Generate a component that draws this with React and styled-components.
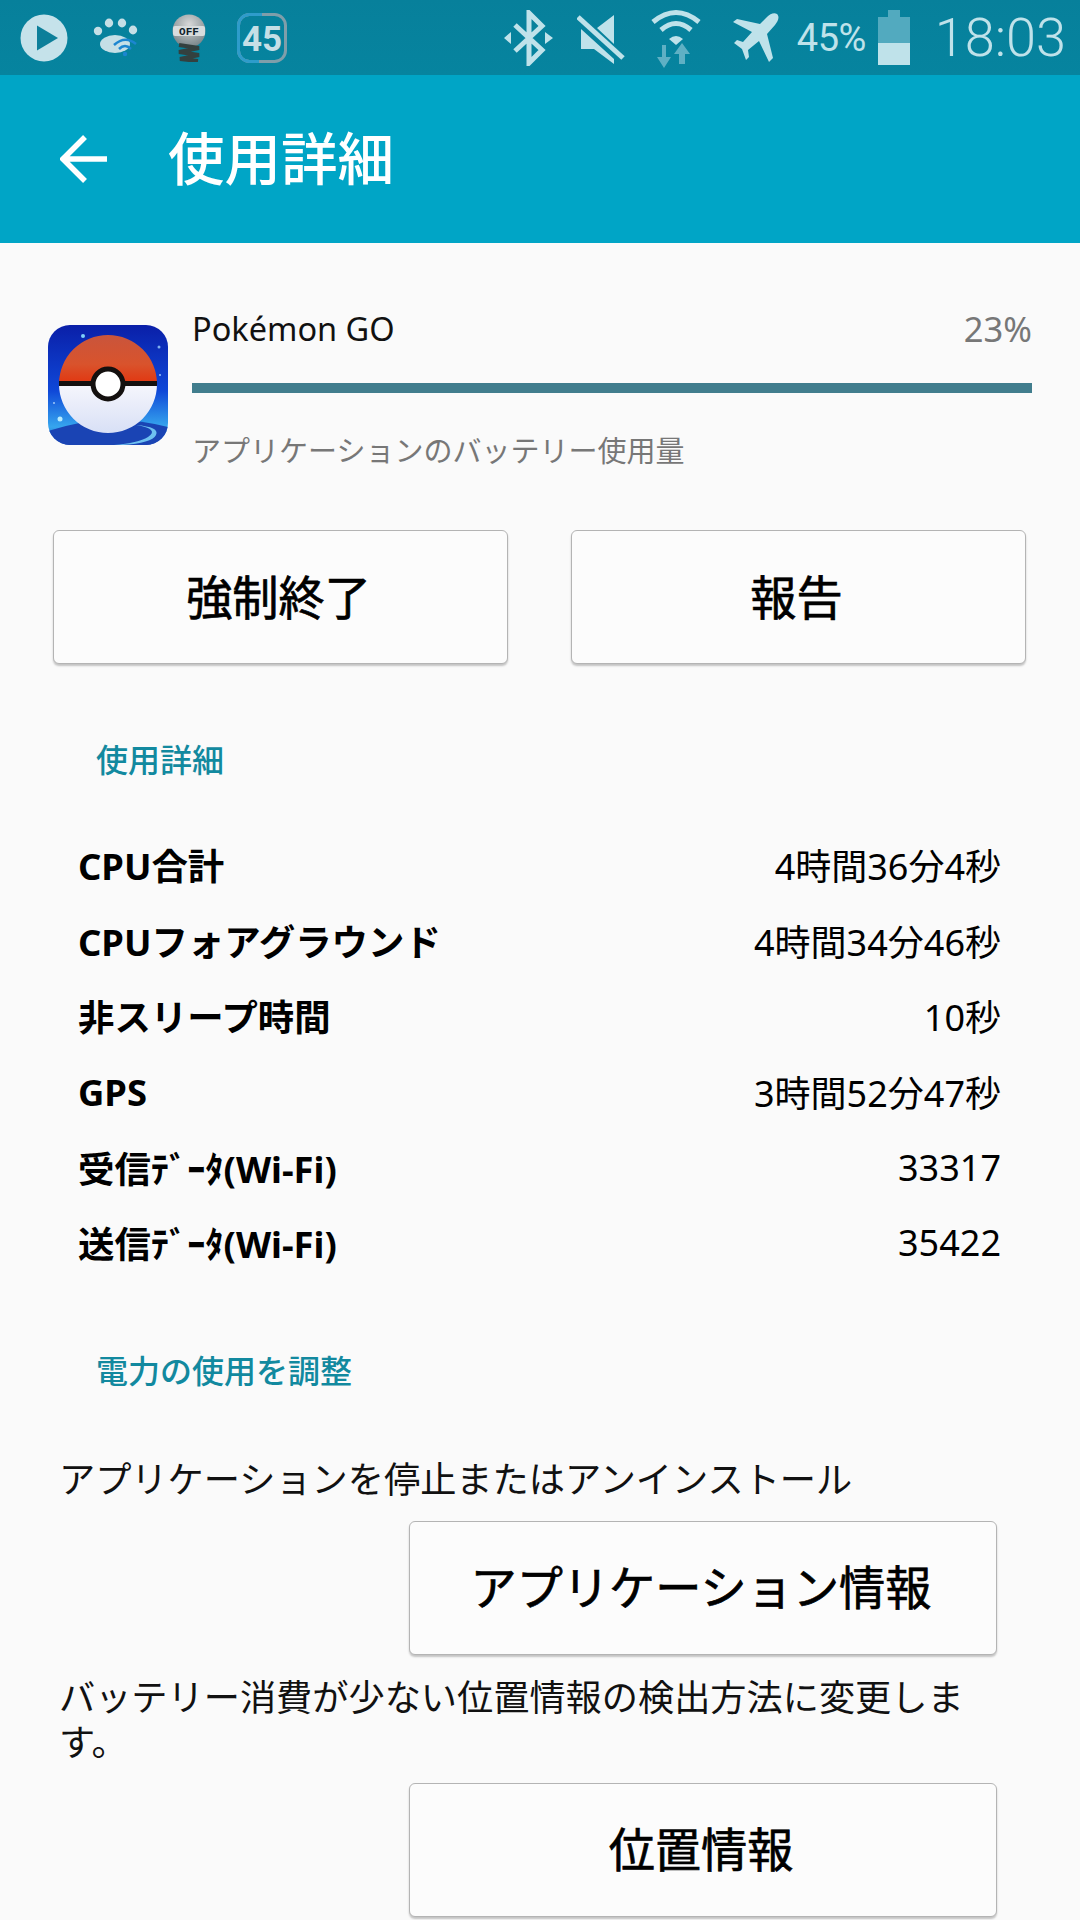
import React from "react";
import styled, { createGlobalStyle } from "styled-components";

const GlobalStyle = createGlobalStyle`
	html, body {
		margin: 0;
		padding: 0;
		background: #fafafa;
		font-family: "Noto Sans", "Noto Sans CJK JP", sans-serif;
	}
`;

const Page = styled.div`
	width: 1080px;
	height: 1920px;
	overflow: hidden;
	background: #fafafa;
	color: #000;
`;

const StatusBar = styled.div`
	height: 75px;
	background: linear-gradient(#07809b, #06849f);
	display: flex;
	align-items: center;
	justify-content: space-between;
	padding: 0 14px 0 20px;
	box-sizing: border-box;
	color: #bfe2ea;
`;

const StatusGroup = styled.div`
	display: flex;
	align-items: center;
`;

const StatusSlot = styled.div`
	display: flex;
	align-items: center;
	margin-left: ${props => props.gap || 0}px;
	height: 75px;
`;

const BatteryText = styled.span`
	font-family: "Roboto", sans-serif;
	font-size: 38px;
	letter-spacing: -0.5px;
	color: #bfe2ea;
`;

const Clock = styled.span`
	font-family: "Roboto", sans-serif;
	font-size: 54px;
	font-weight: 300;
	color: #bfe2ea;
`;

const AppBar = styled.div`
	height: 168px;
	background: #00a5c6;
	display: flex;
	align-items: center;
	padding-left: 60px;
	box-sizing: border-box;
`;

const AppBarTitle = styled.h1`
	margin: 0 0 0 60px;
	font-size: 56.5px;
	line-height: 70px;
	font-weight: 500;
	color: #fff;
`;

const AppInfo = styled.div`
	display: flex;
	gap: 24px;
	padding: 60px 48px 0;
`;

const AppIcon = styled.svg`
	flex: none;
	width: 120px;
	height: 120px;
	margin-top: 22px;
`;

const AppDetails = styled.div`
	flex: 1;
`;

const AppHead = styled.div`
	display: flex;
	justify-content: space-between;
	align-items: center;
	height: 50px;
`;

const AppName = styled.span`
	font-size: 32.5px;
	color: #111;
`;

const Percent = styled.span`
	font-size: 34.5px;
	color: #777;
`;

const UsageBar = styled.div`
	height: 10px;
	margin-top: 30px;
	background: #417d8d;
`;

const AppCaption = styled.div`
	height: 40px;
	line-height: 40px;
	margin-top: 38px;
	font-size: 29px;
	color: #777;
`;

const ButtonRow = styled.div`
	display: flex;
	justify-content: space-between;
	padding: 0 54px 0 53px;
	margin-top: 59px;
`;

const Btn = styled.button`
	display: block;
	width: ${props => props.width}px;
	height: 134px;
	padding: 0 4px 5px 0;
	box-sizing: border-box;
	background: #fcfcfc;
	border: 1px solid #b4b4b4;
	border-radius: 6px;
	box-shadow: 0 2px 2px rgba(0, 0, 0, 0.22);
	font-family: inherit;
	font-size: 46.2px;
	font-weight: 400;
	-webkit-text-stroke: 0.7px #000;
	color: #000;
`;

const SectionTitle = styled.h2`
	margin: ${props => props.top}px 0 0;
	padding-left: 96px;
	height: 50px;
	line-height: 50px;
	font-size: 32px;
	font-weight: 500;
	color: #12899f;
`;

const StatList = styled.div`
	margin-top: 42px;
	padding: 0 79px 0 78px;
`;

const StatRow = styled.div`
	display: flex;
	justify-content: space-between;
	align-items: center;
	height: 75.6px;
`;

const StatLabel = styled.span`
	font-size: 36.4px;
	font-weight: 700;
`;

const StatValue = styled.span`
	font-size: 36px;
`;

const ActionText = styled.p`
	margin: ${props => props.top}px 0 0;
	padding-left: 59px;
	width: 924px;
	font-size: 36.2px;
	line-height: 45px;
	color: #111;
`;

const ActionButton = styled(Btn)`
	margin: ${props => props.top}px 0 0 409px;
`;

const stats = [
	["CPU合計", "4時間36分4秒"],
	["CPUフォアグラウンド", "4時間34分46秒"],
	["非スリープ時間", "10秒"],
	["GPS", "3時間52分47秒"],
	["受信ﾃﾞｰﾀ(Wi-Fi)", "33317"],
	["送信ﾃﾞｰﾀ(Wi-Fi)", "35422"],
];

const PlayIcon = () => (
	<svg width="48" height="48" viewBox="0 0 48 48">
		<circle cx="24" cy="24" r="23.5" fill="#c5e2ea" />
		<path d="M17 11.5 L38 24 L17 36.5 Z" fill="#0c7f9a" />
	</svg>
);

const PawIcon = () => (
	<svg width="46" height="40" viewBox="0 0 46 40">
		<ellipse cx="5" cy="13" rx="4.2" ry="4.2" fill="#c5dfe6" />
		<ellipse cx="16" cy="5" rx="4.2" ry="4.4" fill="#c5dfe6" />
		<ellipse cx="29" cy="5" rx="4.2" ry="4.4" fill="#c5dfe6" />
		<ellipse cx="40" cy="12" rx="4.2" ry="4.4" fill="#c5dfe6" />
		<ellipse cx="22" cy="26" rx="15" ry="9" fill="#c5dfe6" />
		<path d="M21 27 Q32 17 43 26" stroke="#1c86d0" strokeWidth="2.5" fill="none" />
		<path d="M26 31 Q32 25 38 31" stroke="#1c86d0" strokeWidth="2.5" fill="none" />
		<circle cx="32" cy="36" r="2.2" fill="#1c86d0" />
	</svg>
);

const BulbIcon = () => (
	<svg width="36" height="48" viewBox="0 0 36 48">
		<defs>
			<radialGradient id="bulbFill" cx="0.5" cy="0.3" r="0.75">
				<stop offset="0" stopColor="#d8d8d8" />
				<stop offset="1" stopColor="#6f7d82" />
			</radialGradient>
		</defs>
		<circle cx="18" cy="17" r="16.5" fill="url(#bulbFill)" />
		<rect x="2" y="12" width="32" height="10" rx="2" fill="#d8dcdd" />
		<text x="18" y="21" textAnchor="middle" fontSize="11" fontWeight="700" fontFamily="Liberation Mono, monospace" fill="#10202a">OFF</text>
		<path d="M8 31 L28 34 L8 38 L28 41 L9 45 L27 47" stroke="#33403f" strokeWidth="4" fill="none" />
	</svg>
);

const TimerIcon = () => (
	<svg width="50" height="50" viewBox="0 0 50 50">
		<rect x="1.5" y="1.5" width="47" height="47" rx="11" fill="none" stroke="#7f9eaa" strokeWidth="3" />
		<path d="M25 1.5 H12.5 A11 11 0 0 0 1.5 12.5 V37.5 A11 11 0 0 0 12.5 48.5 H22" fill="none" stroke="#2e9ccb" strokeWidth="3" />
		<text x="25" y="38" textAnchor="middle" fontSize="35" fontWeight="700" fontFamily="Roboto, sans-serif" fill="#c5dfe6">45</text>
	</svg>
);

const BluetoothIcon = () => (
	<svg width="50" height="56" viewBox="0 0 50 56">
		<path d="M11 15 L38 40 L25 53 V3 L38 16 L11 41" stroke="#bfe2ea" strokeWidth="5" fill="none" />
		<path d="M0 28 L7 22 V34 Z M49 28 L41 22 V34 Z" fill="#bfe2ea" />
	</svg>
);

const MuteIcon = () => (
	<svg width="48" height="54" viewBox="0 0 48 54">
		<path d="M4 18 V38 H17 L37 53 L37 48 L4 18 Z M37 4 L20 17 L37 33 Z" fill="#bfe2ea" />
		<path d="M1 6 L46 47" stroke="#bfe2ea" strokeWidth="5" fill="none" />
	</svg>
);

const WifiIcon = () => (
	<svg width="50" height="60" viewBox="0 0 50 60">
		<path d="M2 14 Q25 -5 48 14" stroke="#bfe2ea" strokeWidth="5" fill="none" />
		<path d="M10 22 Q25 9 40 22" stroke="#bfe2ea" strokeWidth="5" fill="none" />
		<path d="M18 31 Q25 25 32 31 L25 37 Z" fill="#bfe2ea" />
		<path d="M15 37 V49 H20 L13 60 L6 49 H11 V37 Z" fill="#5fb0c4" />
		<path d="M31 35 L39 46 H34 V56 H28 V46 H23 Z" fill="#5fb0c4" />
	</svg>
);

const PlaneIcon = () => (
	<svg width="46" height="50" viewBox="0 0 46 50">
		<path d="M44 1 C41 -1 37 1 34 4 L27 11 L4 6 L0 9 L19 19 L10 29 L4 27 L1 30 L9 36 L13 47 L16 44 L15 37 L26 28 L36 49 L40 45 L34 21 L42 12 C45 8 47 4 44 1 Z" fill="#bfe2ea" />
	</svg>
);

const BatteryIcon = () => (
	<svg width="32" height="55" viewBox="0 0 32 55">
		<path d="M10 0 H22 V7 H32 V33 H0 V7 H10 Z" fill="#52aabf" />
		<rect x="0" y="33" width="32" height="22" fill="#bfe2ea" />
	</svg>
);

const BackArrow = () => (
	<svg width="48" height="48" viewBox="0 0 48 48">
		<path d="M47 24 H4 M25 2 L3 24 L25 46" stroke="#fff" strokeWidth="5.5" fill="none" />
	</svg>
);

const GoIcon = () => (
	<AppIcon viewBox="0 0 120 120">
		<defs>
			<linearGradient id="sky" x1="0" y1="0" x2="0" y2="1">
				<stop offset="0" stopColor="#0a1fa8" />
				<stop offset="0.55" stopColor="#0f48d8" />
				<stop offset="0.85" stopColor="#36a6ee" />
				<stop offset="1" stopColor="#1a46b8" />
			</linearGradient>
			<linearGradient id="redTop" x1="0" y1="0" x2="0" y2="1">
				<stop offset="0" stopColor="#c9553c" />
				<stop offset="0.6" stopColor="#d9532c" />
				<stop offset="1" stopColor="#e2350f" />
			</linearGradient>
			<linearGradient id="whiteBottom" x1="0" y1="0" x2="0" y2="1">
				<stop offset="0" stopColor="#f6f6fc" />
				<stop offset="1" stopColor="#d8e0f6" />
			</linearGradient>
			<clipPath id="iconClip">
				<rect width="120" height="120" rx="22" />
			</clipPath>
		</defs>
		<g clipPath="url(#iconClip)">
			<rect width="120" height="120" fill="url(#sky)" />
			<path d="M0 106 Q60 86 120 102 V120 H0 Z" fill="#1a44b4" />
			<path d="M88 100 Q112 104 100 112 Q90 118 66 120 L74 120 Q104 118 108 110 Q112 102 88 100 Z" fill="#6ec0f0" />
			<circle cx="35" cy="11" r="2" fill="#7fd0f8" />
			<circle cx="111" cy="22" r="1.5" fill="#7fb0f0" />
			<circle cx="12" cy="94" r="2.5" fill="#b8ecff" />
			<circle cx="112" cy="50" r="1" fill="#a0c8f8" />
			<circle cx="6" cy="78" r="1" fill="#a0c8f8" />
			<path d="M11 59 A49 49 0 0 1 109 59 Z" fill="url(#redTop)" />
			<path d="M11 59 A49 49 0 0 0 109 59 Z" fill="url(#whiteBottom)" />
			<rect x="11" y="56" width="98" height="5" fill="#14100f" />
			<circle cx="60" cy="59" r="15" fill="#fff" stroke="#14100f" strokeWidth="5" />
		</g>
	</AppIcon>
);

export default function App() {
	return (
		<Page>
			<GlobalStyle />
			<StatusBar>
				<StatusGroup>
					<PlayIcon />
					<StatusSlot gap={25}><PawIcon /></StatusSlot>
					<StatusSlot gap={32}><BulbIcon /></StatusSlot>
					<StatusSlot gap={30}><TimerIcon /></StatusSlot>
				</StatusGroup>
				<StatusGroup>
					<BluetoothIcon />
					<StatusSlot gap={23}><MuteIcon /></StatusSlot>
					<StatusSlot gap={26}><WifiIcon /></StatusSlot>
					<StatusSlot gap={32}><PlaneIcon /></StatusSlot>
					<StatusSlot gap={18}><BatteryText>45%</BatteryText></StatusSlot>
					<StatusSlot gap={12}><BatteryIcon /></StatusSlot>
					<StatusSlot gap={25}><Clock>18:03</Clock></StatusSlot>
				</StatusGroup>
			</StatusBar>
			<AppBar>
				<BackArrow />
				<AppBarTitle>使用詳細</AppBarTitle>
			</AppBar>
			<AppInfo>
				<GoIcon />
				<AppDetails>
					<AppHead>
						<AppName>Pokémon GO</AppName>
						<Percent>23%</Percent>
					</AppHead>
					<UsageBar />
					<AppCaption>アプリケーションのバッテリー使用量</AppCaption>
				</AppDetails>
			</AppInfo>
			<ButtonRow>
				<Btn width={455}>強制終了</Btn>
				<Btn width={455}>報告</Btn>
			</ButtonRow>
			<SectionTitle top={71}>使用詳細</SectionTitle>
			<StatList>
				{stats.map(([label, value]) => (
					<StatRow key={label}>
						<StatLabel>{label}</StatLabel>
						<StatValue>{value}</StatValue>
					</StatRow>
				))}
			</StatList>
			<SectionTitle top={65}>電力の使用を調整</SectionTitle>
			<ActionText top={61}>アプリケーションを停止またはアンインストール</ActionText>
			<ActionButton width={588} top={19}>アプリケーション情報</ActionButton>
			<ActionText top={20}>バッテリー消費が少ない位置情報の検出方法に変更します。</ActionText>
			<ActionButton width={588} top={18}>位置情報</ActionButton>
		</Page>
	);
}
